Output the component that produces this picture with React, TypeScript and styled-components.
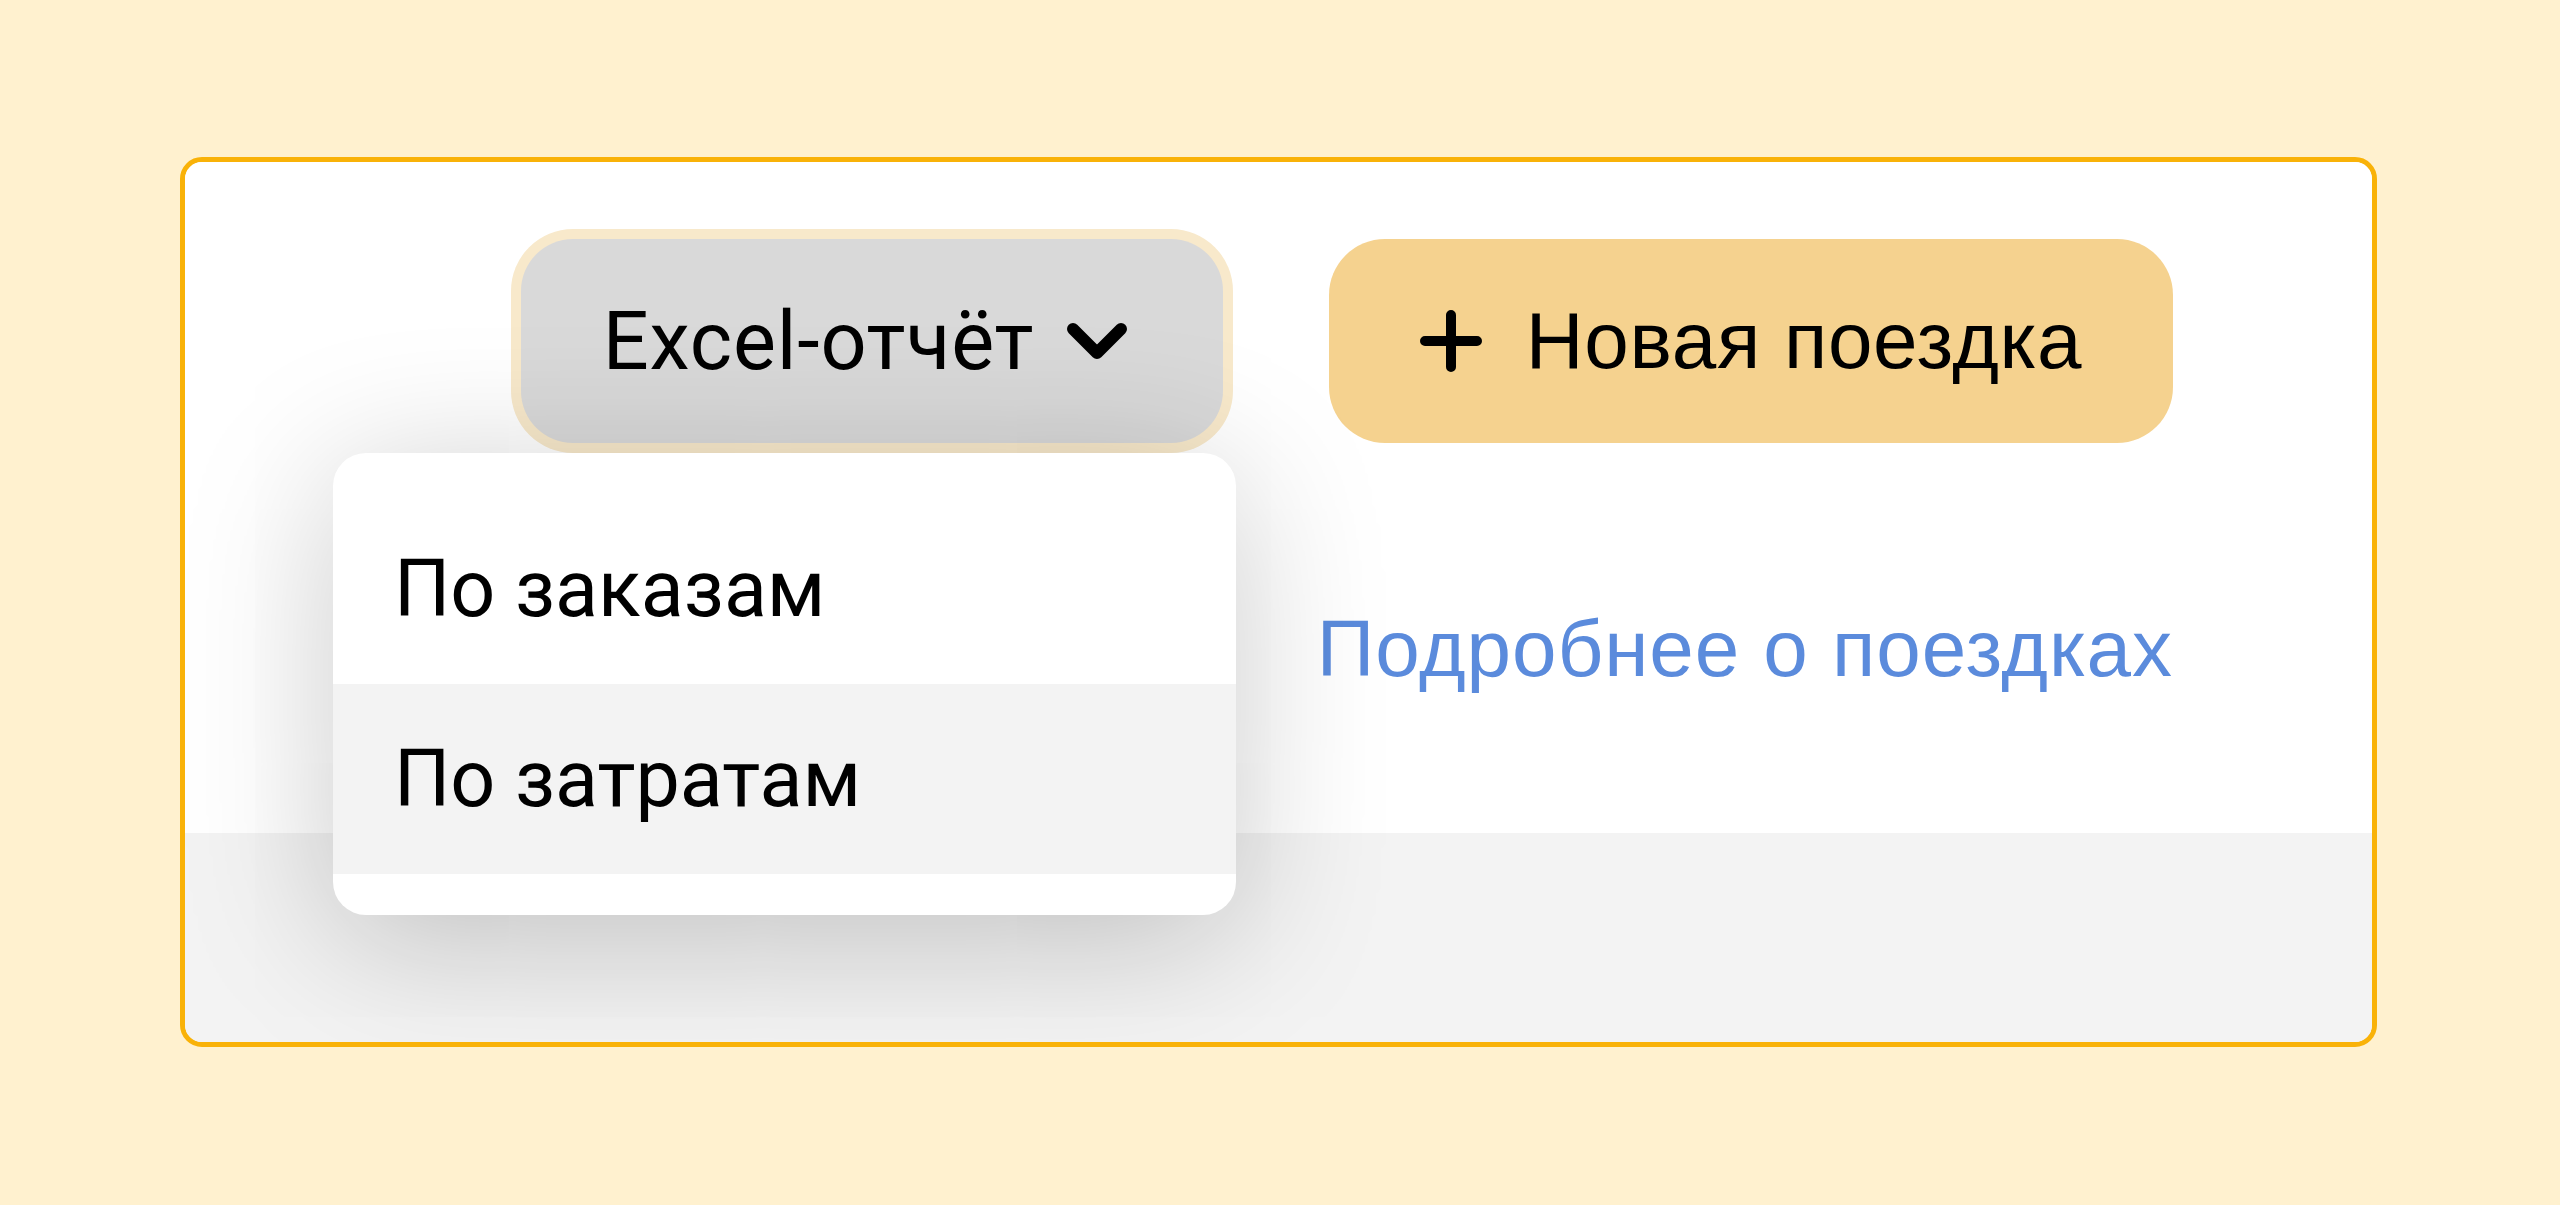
import React from "react";
import styled, { createGlobalStyle } from "styled-components";

const GlobalStyle = createGlobalStyle`
  html, body {
    margin: 0;
    padding: 0;
    background: #fff1cf;
  }
  body {
    font-family: Roboto, "Noto Sans", sans-serif;
    -webkit-font-smoothing: antialiased;
  }
  * { box-sizing: border-box; }
`;

const Page = styled.div`
  width: 2560px;
  height: 1205px;
  padding: 157px 183px 0 180px;
  background: #fff1cf;
`;

const Card = styled.section`
  height: 890px;
  border: 5px solid #f9b208;
  border-radius: 22px;
  background: #f3f3f3;
  overflow: hidden;
  display: flex;
  flex-direction: column;
`;

const TopPanel = styled.div`
  height: 671px;
  flex: none;
  background: #ffffff;
  display: flex;
  flex-direction: column;
  align-items: flex-end;
  padding: 77px 199px 0 0;
`;

const Toolbar = styled.div`
  display: flex;
  align-items: flex-start;
  gap: 106px;
`;

const DropdownWrap = styled.div`
  position: relative;
`;

const ExcelButton = styled.button`
  width: 702px;
  height: 204px;
  border: none;
  border-radius: 52px;
  background: #d9d9d9;
  box-shadow: 0 0 0 10px #f8e9cb;
  display: flex;
  align-items: center;
  justify-content: center;
  gap: 33px;
  padding: 0 14px 0 0;
  font-family: Roboto, "Noto Sans", sans-serif;
  font-size: 81px;
  letter-spacing: 0.8px;
  line-height: 1;
  color: #000;
  cursor: pointer;
`;

const PrimaryButton = styled.button`
  width: 844px;
  height: 204px;
  border: none;
  border-radius: 56px;
  background: #f5d28f;
  display: flex;
  align-items: center;
  justify-content: center;
  gap: 44px;
  padding: 0;
  font-family: "Liberation Sans", Arial, sans-serif;
  font-size: 80px;
  letter-spacing: 0.7px;
  line-height: 1;
  color: #000;
  cursor: pointer;
`;

const Menu = styled.div`
  position: absolute;
  z-index: 2;
  top: calc(100% + 10px);
  left: -188px;
  width: 903px;
  padding: 41px 0;
  background: #ffffff;
  border-radius: 33px;
  box-shadow: 0 24px 150px rgba(0, 0, 0, 0.22);
`;

const MenuItem = styled.div<{ $active?: boolean }>`
  height: 190px;
  display: flex;
  align-items: center;
  padding-left: 61px;
  background: ${(p) => (p.$active ? "#f3f3f3" : "transparent")};
  font-family: Roboto, "Noto Sans", sans-serif;
  font-size: 79px;
  line-height: 1;
  color: #000;
`;

const MoreLink = styled.a`
  margin-top: 166px;
  font-family: "Liberation Sans", Arial, sans-serif;
  font-size: 80px;
  letter-spacing: 0.95px;
  line-height: 1;
  color: #5b8bdc;
  text-decoration: none;
`;

const BottomPanel = styled.div`
  flex: 1;
  background: #f3f3f3;
`;

const Chevron = () => (
  <svg width="60" height="36" viewBox="0 0 60 36" fill="none">
    <path
      d="M6 6 L30 30 L54 6"
      stroke="#000"
      strokeWidth="12"
      strokeLinecap="round"
      strokeLinejoin="round"
    />
  </svg>
);

const Plus = () => (
  <svg width="62" height="62" viewBox="0 0 62 62" fill="none">
    <path
      d="M31 5 V57 M5 31 H57"
      stroke="#000"
      strokeWidth="10"
      strokeLinecap="round"
    />
  </svg>
);

export default function App() {
  return (
    <>
      <GlobalStyle />
      <Page>
        <Card>
          <TopPanel>
            <Toolbar>
              <DropdownWrap>
                <ExcelButton>
                  <span>Excel-отчёт</span>
                  <Chevron />
                </ExcelButton>
                <Menu>
                  <MenuItem>По заказам</MenuItem>
                  <MenuItem $active>По затратам</MenuItem>
                </Menu>
              </DropdownWrap>
              <PrimaryButton>
                <Plus />
                <span>Новая поездка</span>
              </PrimaryButton>
            </Toolbar>
            <MoreLink href="#">Подробнее о поездках</MoreLink>
          </TopPanel>
          <BottomPanel />
        </Card>
      </Page>
    </>
  );
}
